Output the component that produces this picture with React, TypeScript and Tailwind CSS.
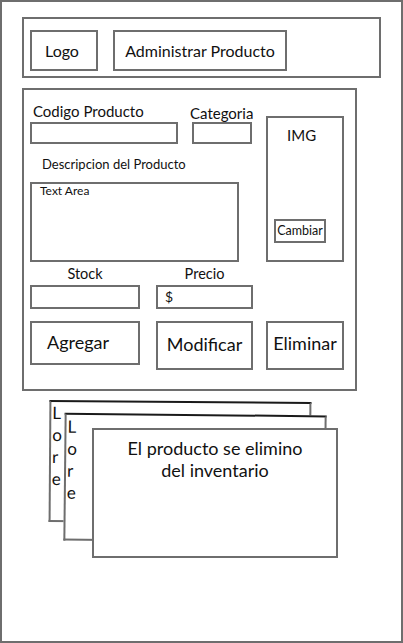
import React from "react";

const B = "border-2 border-[#6e6e6e]";

export default function App() {
  return (
    <div className="w-[403px] h-[643px] bg-white border-2 border-[#6e6e6e] flex flex-col font-['Lato',sans-serif] text-[#111]">
      {/* Header */}
      <div className={`ml-[20px] mt-[15px] w-[359px] h-[61px] ${B} pl-[6px] pt-[11px] flex gap-[15px] items-start`}>
        <div className={`w-[68px] h-[41px] ${B} pl-[13px] pt-[9px] text-[16px] leading-[20px]`}>Logo</div>
        <div className={`w-[174px] h-[41px] ${B} flex justify-center pt-[9px] text-[16px] leading-[20px]`}>Administrar Producto</div>
      </div>

      {/* Main panel */}
      <div className={`ml-[20px] mt-[10px] w-[335px] h-[303px] ${B} pl-[6px] flex flex-col`}>
        <div className="flex gap-[14px]">
          {/* left column */}
          <div className="w-[222px] flex flex-col pt-[12px]">
            <div className="flex gap-[14px] items-end">
              <div className="flex flex-col">
                <div className="pl-[3px] text-[15px] leading-[18px] mb-[2px]">Codigo Producto</div>
                <div className={`w-[148px] h-[22px] ${B}`} />
              </div>
              <div className="flex flex-col">
                <div className="ml-[-2px] text-[15px] leading-[18px]">Categoria</div>
                <div className={`w-[60px] h-[22px] ${B}`} />
              </div>
            </div>
            <div className="mt-[12px] pl-[12px] text-[13px] leading-[16px]">Descripcion del Producto</div>
            <div className={`mt-[10px] w-[209px] h-[80px] ${B} pl-[8px] text-[12px] leading-[14px]`}>Text Area</div>
          </div>
          {/* IMG */}
          <div className={`mt-[26px] w-[78px] h-[146px] ${B} flex flex-col`}>
            <div className="pl-[19px] pt-[8px] text-[15px] leading-[18px]">IMG</div>
            <div className={`mt-auto mb-[17px] ml-[6px] w-[52px] h-[24px] ${B} flex items-center justify-center text-[12.5px] leading-[16px]`}>Cambiar</div>
          </div>
        </div>

        {/* Stock / Precio */}
        <div className="mt-[3px] flex gap-[16px]">
          <div className="flex flex-col w-[110px]">
            <div className="text-center text-[14.5px] leading-[18px] mb-[2px]">Stock</div>
            <div className={`h-[24px] ${B}`} />
          </div>
          <div className="flex flex-col w-[97px]">
            <div className="text-center text-[14.5px] leading-[18px] mb-[2px]">Precio</div>
            <div className={`h-[24px] ${B} pl-[7px] text-[14px] leading-[20px]`}>$</div>
          </div>
        </div>

        {/* Buttons */}
        <div className="mt-[12px] flex items-start">
          <div className={`w-[110px] h-[44px] ${B} pl-[15px] pt-[8px] text-[18px] leading-[22px]`}>Agregar</div>
          <div className={`ml-[16px] w-[97px] h-[49px] ${B} text-center pt-[10px] text-[18px] leading-[22px]`}>Modificar</div>
          <div className={`ml-[13px] w-[78px] h-[49px] ${B} text-center pt-[9px] text-[18px] leading-[22px]`}>Eliminar</div>
        </div>
      </div>

      {/* Stacked cards */}
      <div className="relative flex-1">
        <div className={`absolute left-[47px] top-[10px] w-[262px] h-[122px] ${B} border-t-[#1a1a1a] rotate-[0.4deg] bg-white pl-[1px] text-[17px] leading-[22px]`}>
          <div className="flex flex-col w-[12px]">
            <span>L</span><span>o</span><span>r</span><span>e</span>
          </div>
        </div>
        <div className={`absolute left-[62px] top-[23px] w-[262px] h-[128px] ${B} border-t-[#1a1a1a] rotate-[0.6deg] bg-white pl-[1px] pt-[1px] text-[17px] leading-[22px]`}>
          <div className="flex flex-col w-[12px]">
            <span>L</span><span>o</span><span>r</span><span>e</span>
          </div>
        </div>
        <div className={`absolute left-[90px] top-[37px] w-[246px] h-[130px] ${B} bg-white pt-[7px] text-center text-[18px] leading-[22px]`}>
          El producto se elimino
          <br />
          del inventario
        </div>
      </div>
    </div>
  );
}
